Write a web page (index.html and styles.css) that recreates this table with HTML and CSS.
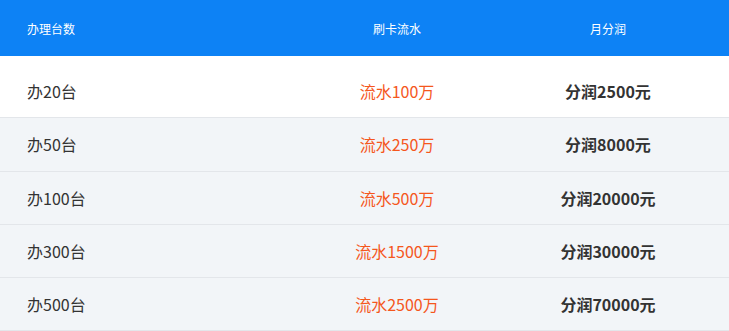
FILE: index.html
```html
<!DOCTYPE html>
<html lang="zh">
<head>
<meta charset="utf-8">
<link rel="stylesheet" href="styles.css">
</head>
<body>
<div class="table">
  <div class="head">
    <div class="c1">办理台数</div>
    <div class="c2">刷卡流水</div>
    <div class="c3">月分润</div>
  </div>
  <div class="body">
    <div class="row"><div class="c1">办20台</div><div class="c2 flow">流水100万</div><div class="c3 profit">分润2500元</div></div>
    <div class="row alt"><div class="c1">办50台</div><div class="c2 flow">流水250万</div><div class="c3 profit">分润8000元</div></div>
    <div class="row alt"><div class="c1">办100台</div><div class="c2 flow">流水500万</div><div class="c3 profit">分润20000元</div></div>
    <div class="row alt"><div class="c1">办300台</div><div class="c2 flow">流水1500万</div><div class="c3 profit">分润30000元</div></div>
    <div class="row alt"><div class="c1">办500台</div><div class="c2 flow">流水2500万</div><div class="c3 profit">分润70000元</div></div>
  </div>
</div>
</body>
</html>
```
FILE: styles.css
```css
html, body {
  margin: 0;
  padding: 0;
  background: #fff;
}
body {
  font-family: "Noto Sans CJK SC", "Noto Sans", sans-serif;
  color: #333;
}
.table {
  width: 729px;
}
.head, .row {
  display: grid;
  grid-template-columns: 307px 180px 1fr;
  align-items: center;
}
.head {
  height: 56px;
  background: #0d82f5;
  color: #fff;
  font-size: 12px;
}
.head .c1 {
  padding-left: 27px;
}
.c2, .c3 {
  text-align: center;
}
.body {
  padding-top: 9px;
}
.row {
  height: 52.25px;
  border-bottom: 1px solid #e3e6ea;
  font-size: 16px;
}
.row .c1 {
  padding-left: 27px;
}
.row.alt {
  background: #f2f5f8;
}
.flow {
  color: #f5571d;
}
.profit {
  font-weight: bold;
  color: #333;
}
```
